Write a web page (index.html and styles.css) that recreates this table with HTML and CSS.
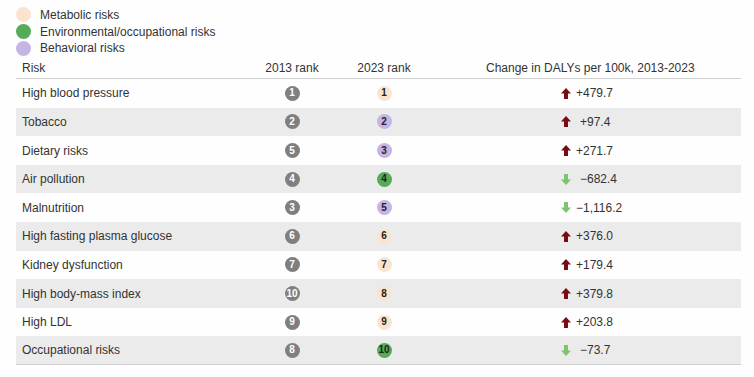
FILE: index.html
```html
<!DOCTYPE html>
<html>
<head>
<meta charset="utf-8">
<link rel="stylesheet" href="styles.css">
</head>
<body>
<div class="legend">
  <div class="legend-item"><span class="dot metabolic"></span>Metabolic risks</div>
  <div class="legend-item"><span class="dot env"></span>Environmental/occupational risks</div>
  <div class="legend-item"><span class="dot beh"></span>Behavioral risks</div>
</div>
<div class="table">
  <div class="row head">
    <div class="c-risk">Risk</div>
    <div class="c-rank">2013 rank</div>
    <div class="c-rank">2023 rank</div>
    <div class="c-change-h">Change in DALYs per 100k, 2013-2023</div>
  </div>

  <div class="row">
    <div class="c-risk">High blood pressure</div>
    <div class="c-rank"><span class="b old">1</span></div>
    <div class="c-rank"><span class="b metabolic">1</span></div>
    <div class="c-change"><svg class="ar up" viewBox="0 0 10 11"><path d="M5 0 L10 5.5 L7 5.5 L7 11 L3 11 L3 5.5 L0 5.5 Z"/></svg><span>+479.7</span></div>
  </div>
  <div class="row alt">
    <div class="c-risk">Tobacco</div>
    <div class="c-rank"><span class="b old">2</span></div>
    <div class="c-rank"><span class="b beh">2</span></div>
    <div class="c-change"><svg class="ar up" viewBox="0 0 10 11"><path d="M5 0 L10 5.5 L7 5.5 L7 11 L3 11 L3 5.5 L0 5.5 Z"/></svg><span class="sp">+97.4</span></div>
  </div>
  <div class="row">
    <div class="c-risk">Dietary risks</div>
    <div class="c-rank"><span class="b old">5</span></div>
    <div class="c-rank"><span class="b beh">3</span></div>
    <div class="c-change"><svg class="ar up" viewBox="0 0 10 11"><path d="M5 0 L10 5.5 L7 5.5 L7 11 L3 11 L3 5.5 L0 5.5 Z"/></svg><span>+271.7</span></div>
  </div>
  <div class="row alt">
    <div class="c-risk">Air pollution</div>
    <div class="c-rank"><span class="b old">4</span></div>
    <div class="c-rank"><span class="b env">4</span></div>
    <div class="c-change"><svg class="ar down" viewBox="0 0 10 11"><path d="M5 11 L10 5.5 L7 5.5 L7 0 L3 0 L3 5.5 L0 5.5 Z"/></svg><span class="sp">−682.4</span></div>
  </div>
  <div class="row">
    <div class="c-risk">Malnutrition</div>
    <div class="c-rank"><span class="b old">3</span></div>
    <div class="c-rank"><span class="b beh">5</span></div>
    <div class="c-change"><svg class="ar down" viewBox="0 0 10 11"><path d="M5 11 L10 5.5 L7 5.5 L7 0 L3 0 L3 5.5 L0 5.5 Z"/></svg><span>−1,116.2</span></div>
  </div>
  <div class="row alt">
    <div class="c-risk">High fasting plasma glucose</div>
    <div class="c-rank"><span class="b old">6</span></div>
    <div class="c-rank"><span class="b metabolic">6</span></div>
    <div class="c-change"><svg class="ar up" viewBox="0 0 10 11"><path d="M5 0 L10 5.5 L7 5.5 L7 11 L3 11 L3 5.5 L0 5.5 Z"/></svg><span>+376.0</span></div>
  </div>
  <div class="row">
    <div class="c-risk">Kidney dysfunction</div>
    <div class="c-rank"><span class="b old">7</span></div>
    <div class="c-rank"><span class="b metabolic">7</span></div>
    <div class="c-change"><svg class="ar up" viewBox="0 0 10 11"><path d="M5 0 L10 5.5 L7 5.5 L7 11 L3 11 L3 5.5 L0 5.5 Z"/></svg><span>+179.4</span></div>
  </div>
  <div class="row alt">
    <div class="c-risk">High body-mass index</div>
    <div class="c-rank"><span class="b old">10</span></div>
    <div class="c-rank"><span class="b metabolic">8</span></div>
    <div class="c-change"><svg class="ar up" viewBox="0 0 10 11"><path d="M5 0 L10 5.5 L7 5.5 L7 11 L3 11 L3 5.5 L0 5.5 Z"/></svg><span>+379.8</span></div>
  </div>
  <div class="row">
    <div class="c-risk">High LDL</div>
    <div class="c-rank"><span class="b old">9</span></div>
    <div class="c-rank"><span class="b metabolic">9</span></div>
    <div class="c-change"><svg class="ar up" viewBox="0 0 10 11"><path d="M5 0 L10 5.5 L7 5.5 L7 11 L3 11 L3 5.5 L0 5.5 Z"/></svg><span>+203.8</span></div>
  </div>
  <div class="row alt last">
    <div class="c-risk">Occupational risks</div>
    <div class="c-rank"><span class="b old">8</span></div>
    <div class="c-rank"><span class="b env">10</span></div>
    <div class="c-change"><svg class="ar down" viewBox="0 0 10 11"><path d="M5 11 L10 5.5 L7 5.5 L7 0 L3 0 L3 5.5 L0 5.5 Z"/></svg><span class="sp">−73.7</span></div>
  </div>
</div>
</body>
</html>
```

FILE: styles.css
```css
* { box-sizing: border-box; }
html, body { margin: 0; background: #fefefe; }
body {
  font-family: "Liberation Sans", Arial, sans-serif;
  font-size: 12px;
  color: #333;
  padding: 7px 13px 0 16px;
}
.legend { display: flex; flex-direction: column; gap: 1px; }
.legend-item { display: flex; align-items: center; height: 15.7px; gap: 9px; }
.dot { width: 15px; height: 15px; border-radius: 50%; display: inline-block; }
.dot.metabolic { background: #fbe4cf; }
.dot.env { background: #55ab57; }
.dot.beh { background: #c7b4e7; }

.table { margin-top: 1px; }
.row {
  display: grid;
  grid-template-columns: 230px 92px 92px 1fr;
  align-items: center;
  height: 28.6px;
}
.row.head { height: 22px; border-bottom: 1px solid #d0d0d0; }
.row.alt { background: #ebebeb; }
.row.last { border-bottom: 1px solid #d0d0d0; }
.c-risk { padding-left: 6px; }
.c-rank { display: flex; justify-content: center; }
.c-change-h { padding-left: 56px; }
.c-change { display: flex; align-items: center; padding-left: 131px; gap: 5px; }
.c-change .sp { margin-left: 4px; }
.ar { width: 10px; height: 11px; }
.ar.up { fill: #7a0b10; }
.ar.down { fill: #7dc46e; }
.b {
  width: 15px; height: 15px; border-radius: 50%;
  display: inline-flex; align-items: center; justify-content: center;
  font-size: 10px; font-weight: bold; line-height: 1;
}
.b.old { background: #7f7f7f; color: #fff; }
.b.metabolic { background: #fbe4cf; color: #222; }
.b.env { background: #55ab57; color: #222; }
.b.beh { background: #c7b4e7; color: #222; }
.head .c-rank { color: #333; }
```
